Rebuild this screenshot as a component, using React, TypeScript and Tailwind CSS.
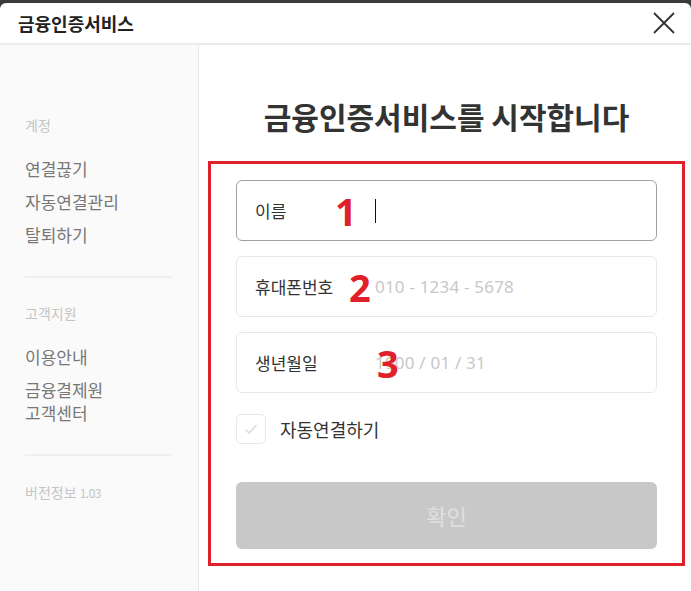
import React from "react";

const font = { fontFamily: '"Noto Sans CJK KR", "Noto Sans", sans-serif' };

function Field({ label, num, numLeft, placeholder, focused, caret }: { label: string; num: string; numLeft: string; placeholder?: string; focused?: boolean; caret?: boolean }) {
  return (
    <div className={`relative flex h-[61px] items-center rounded-[6px] border ${focused ? "border-[#a0a0a0]" : "border-[#e8e8e8]"} pl-[18px]`}>
      <span className="w-[120px] text-[17px] text-[#333]">{label}</span>
      {placeholder && <span className="text-[17px] text-[#c8c8c8] tracking-[0.2px]" style={{ fontFamily: '"Noto Sans", sans-serif' }}>{placeholder}</span>}
      {caret && <span className="h-[24px] w-[1px] bg-[#111]" />}
      <span className={`absolute ${numLeft} top-[8px] text-[38px] font-bold leading-[44px] text-[#e0202a]`} style={{ fontFamily: '"Noto Sans", sans-serif' }}>{num}</span>
    </div>
  );
}

export default function App() {
  return (
    <div className="h-[591px] w-[691px] overflow-hidden bg-[#3a3a3a] pt-[3px]" style={font}>
      <div className="h-[588px] rounded-t-[6px] bg-white flex flex-col">
        <div className="flex h-[42px] items-center justify-between border-b-2 border-[#ececec] pl-[18px] pr-[16px]">
          <span className="text-[18px] font-bold text-[#222]">금융인증서비스</span>
          <svg width="22" height="22" viewBox="0 0 22 22" fill="none" stroke="#333" strokeWidth="1.8">
            <path d="M1 1L21 21M21 1L1 21" />
          </svg>
        </div>
        <div className="flex flex-1">
          <div className="w-[199px] border-r border-[#e8e8e8] bg-[#fafafa] pl-[25px] pr-[26px]">
            <div className="mt-[70px] text-[14px] leading-[20px] text-[#c4c4c4]">계정</div>
            <div className="mt-[22px] flex flex-col gap-[9px] text-[17px] leading-[24px] text-[#777]">
              <span>연결끊기</span>
              <span>자동연결관리</span>
              <span>탈퇴하기</span>
            </div>
            <div className="mt-[29px] h-[2px] bg-[#efefef]" />
            <div className="mt-[25px] text-[14px] leading-[20px] text-[#c4c4c4]">고객지원</div>
            <div className="mt-[22px] flex flex-col gap-[10px] text-[17px] leading-[23px] text-[#777]">
              <span>이용안내</span>
              <span>금융결제원<br />고객센터</span>
            </div>
            <div className="mt-[30px] h-[2px] bg-[#efefef]" />
            <div className="mt-[26px] text-[14px] leading-[20px] text-[#c4c4c4]">
              버전정보 <span className="text-[12px] tracking-[-0.5px]">1.03</span>
            </div>
          </div>
          <div className="flex-1 pl-[9px] pr-[6px]">
            <div className="mt-[52px] text-center text-[30px] font-bold leading-[38px] text-[#333]">
              금융인증서비스를 시작합니다
            </div>
            <div className="mt-[26px] h-[405px] border-[3px] border-[#e0202a] px-[25px] pt-[16px]">
              <div className="flex flex-col gap-[15px]">
                <Field label="이름" num="1" numLeft="left-[98px]" focused caret />
                <Field label="휴대폰번호" num="2" numLeft="left-[112px]" placeholder="010 - 1234 - 5678" />
                <Field label="생년월일" num="3" numLeft="left-[140px]" placeholder="1900 / 01 / 31" />
              </div>
              <div className="mt-[21px] flex items-center">
                <div className="flex h-[30px] w-[30px] items-center justify-center rounded-[5px] border border-[#e8e8e8]">
                  <svg width="16" height="16" viewBox="0 0 16 16" fill="none" stroke="#dcdcdc" strokeWidth="1.6">
                    <path d="M2.5 8.5L6 12L13.5 4" />
                  </svg>
                </div>
                <span className="ml-[14px] text-[18px] text-[#333]">자동연결하기</span>
              </div>
              <div className="mt-[38px] flex h-[67px] items-center justify-center rounded-[6px] bg-[#c8c8c8] text-[22px] text-[#e0e0e0]">
                확인
              </div>
            </div>
          </div>
        </div>
      </div>
    </div>
  );
}
